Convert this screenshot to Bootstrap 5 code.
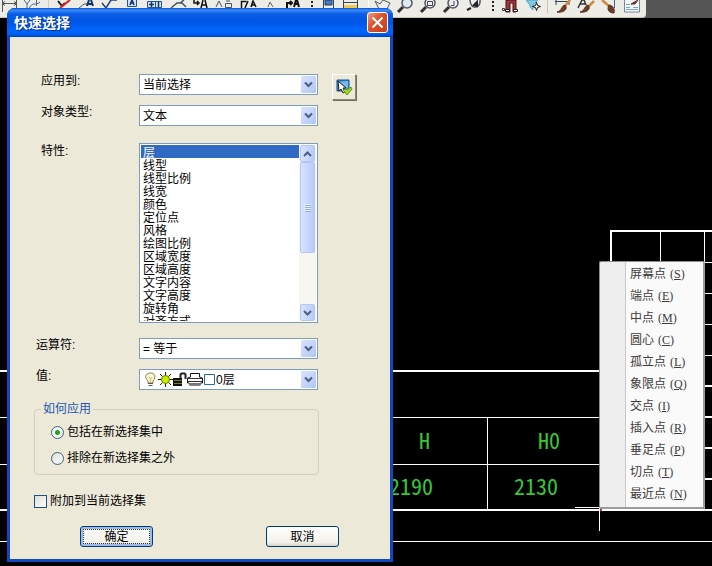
<!DOCTYPE html>
<html lang="zh-CN">
<head>
<meta charset="utf-8">
<meta name="viewport" content="width=device-width, initial-scale=1">
<title>快速选择</title>
<link href="https://cdn.jsdelivr.net/npm/bootstrap@5.3.0/dist/css/bootstrap.min.css" rel="stylesheet">
<style>
  body { background:#000; color:#000; font:12px/14px "Liberation Sans","Noto Sans CJK SC",sans-serif; }
  .cad-canvas { inset:0; }
  .cad-canvas text { fill:#35c835; font-family:"Noto Sans Mono CJK SC","Liberation Mono",monospace; font-size:22px; font-weight:300; }
  .cad-toolbar { background:#555; height:18px; }
  .cad-toolbar .strip { background:#eeece6; border-bottom:1px solid #c9c4b4; border-radius:0 0 4px 0; width:646px; }

  .qs-window { left:7px; top:8px; width:386px; background:#0a49d8; border:3px solid #1247c4; border-top:0; border-radius:8px 8px 0 0; box-shadow:inset 0 0 1px #001c90; }
  .qs-title { height:29px; margin:0 -3px; padding:0 5px 0 7px; border-radius:8px 8px 0 0; background:linear-gradient(#0a4fd0 0,#3c8cf8 2px,#0a5ce6 6px,#0055e4 14px,#0066fc 22px,#0060f4 26px,#0040c0 29px); }
  .qs-title h1 { font:700 14px/18px "Liberation Sans","Noto Sans CJK SC",sans-serif; color:#fff; text-shadow:1px 1px 1px #002a8c; }
  .qs-close { width:21px; height:21px; border:1px solid #fff; border-radius:3px; background:linear-gradient(135deg,#f0a08a,#dc5430 40%,#c63c14); }
  .qs-body { background:#ece9d8; padding:37px 30px 12px 24px; }
  .qs-grid { display:grid; grid-template-columns:105px 179px 24px; row-gap:10px; }
  .qs-grid label { padding-left:7px; }
  .qs-grid label.near { padding-left:2px; }
  .xp-select { appearance:none; width:100%; height:21px; padding:0 20px 0 3px; border:1px solid #7f9db9; border-radius:0; color:#000; font:inherit;
    background:#fff url("data:image/svg+xml,%3Csvg xmlns='http://www.w3.org/2000/svg' width='15' height='17'%3E%3Cdefs%3E%3ClinearGradient id='g' x2='1' y2='1'%3E%3Cstop stop-color='%23dbe5fe'/%3E%3Cstop offset='1' stop-color='%23afc5f6'/%3E%3C/linearGradient%3E%3C/defs%3E%3Crect width='15' height='17' rx='1' fill='url(%23g)'/%3E%3Cpath d='M4 6.500l3.500 3.500 3.500-3.500' fill='none' stroke='%234d6185' stroke-width='2.200'/%3E%3C/svg%3E") no-repeat right 1px center; }
  .with-icons { padding-left:76px; }
  .value-icons { left:5px; top:3px; pointer-events:none; }
  .qs-pick { grid-row:span 2; width:24px; height:26px; margin-left:14px; border:1px solid; border-color:#fff #8a8778 #8a8778 #fff; box-shadow:1px 1px 0 #716f64; background:#ece9d8; }
  .qs-list { margin-top:7px; height:180px; border:1px solid #7f9db9; background:#fff; padding:1px; }
  .qs-list select { appearance:none; border:0; border-radius:0; outline:0; padding:0; height:176px; font:inherit; overflow:hidden; background:#fff; color:#000; }
  .qs-list select::-webkit-scrollbar { display:none; }
  .qs-list option { display:flex; align-items:center; padding:0 2px; min-height:13px; height:13px; line-height:13px; }
  .qs-list option:checked { background:#316ac5 linear-gradient(#316ac5,#316ac5); color:#fff; -webkit-text-fill-color:#fff; }
  .qs-scroll { width:17px; background:#f7f6f0; }
  .qs-scroll button { width:15px; height:17px; margin:0 1px; border:1px solid #b5c7ee; border-radius:2px; background:linear-gradient(90deg,#d7e2fe,#b8ccfa); }
  .qs-scroll .thumb { height:91px; }
  .gap-above { margin-top:5px; }
  .qs-group { width:285px; margin-top:12px; padding:9px 16px; border:1px solid #d0d0bf; border-radius:4px; }
  .qs-group legend { float:none; width:auto; margin:0 0 0 -10px; padding:0 2px; font:inherit; color:#2456b4; }
  .qs-group .choice + .choice { margin-top:12px; }
  .choice { display:flex; align-items:center; gap:3px; height:14px; }
  .choice input { appearance:none; width:13px; height:13px; margin:0; border:1px solid #1c5180; background:linear-gradient(135deg,#dcdcd7,#fff); }
  .choice input[type=radio] { border-radius:50%; border-color:#3f6480; }
  .choice input[type=radio]:checked { background:radial-gradient(circle,#21a121 0 2px,#f4f8f2 3px); }
  .qs-attach { margin-top:19px; }
  .qs-actions { margin-top:18px; padding-left:46px; gap:113px; }
  .xp-btn { width:73px; height:21px; padding:0; border:1px solid #003c74; border-radius:3px; font:inherit; color:#000; background:linear-gradient(#fff,#f2f1ea 80%,#d8d2c4); }
  .xp-btn.default { box-shadow:inset 0 0 0 2px #9db9ee; outline:1px dotted #333; outline-offset:-4px; }

  .snap-menu { left:599px; top:261px; width:106px; padding:1px 0 2px; border:1px solid #8c8c8c; border-right:2px solid #9c9c9c; border-bottom:2px solid #9c9c9c; border-radius:2px; background:linear-gradient(90deg,#eee 25px,#c8c8c8 25px 26px,#fafafa 26px); }
  .snap-menu button { display:block; width:100%; height:22px; padding:0 0 0 30px; border:0; background:none; text-align:left; color:#3c3c3c; font:12px/22px "Liberation Serif","Noto Sans CJK SC",serif; white-space:nowrap; }
  .snap-menu span { margin-left:4px; }
</style>
<script src="https://cdn.jsdelivr.net/npm/bootstrap@5.3.0/dist/js/bootstrap.bundle.min.js"></script>
</head>
<body class="position-relative min-vh-100 overflow-hidden">

<svg class="cad-canvas position-absolute w-100 h-100" aria-label="图纸">
  <g fill="#fff">
    <path d="M0 370h600v2H0zM0 417h600v1H0zM0 464h600v1H0zM0 509h3000v2H0zM0 541h3000v1H0zM487 417h1v93h-1z"/>
    <path d="M610 230h2400v2H610zM610 230h2v40h-2zM660 231h1v40h-1zM704 231h1v279h-1z"/>
    <path d="M704 262h2000v1H704zM704 293h2000v1H704zM704 324h2000v1H704zM704 355h2000v1H704zM704 385h2000v2H704zM704 416h2000v2H704zM704 447h2000v2H704zM704 478h2000v2H704z"/>
    <path d="M575 507h25v1h-25zM599 507h1v24h-1z"/>
  </g>
  <path d="M600 508h2v3h-2z" fill="#c03030"/>
  <text x="419" y="449">H</text>
  <text x="538" y="449">H0</text>
  <text x="389" y="495">2190</text>
  <text x="514" y="495">2130</text>
</svg>

<header class="cad-toolbar position-relative" role="toolbar" aria-label="工具栏">
  <div class="strip">
    <svg class="d-block" width="646" height="17" fill="none" stroke="#334" stroke-width="1">
      <path d="M2.500 0v12M16.500 0v12M2 3.500h15M5 1.500l-3 2 3 2M14 1.500l3 2-3 2" stroke="#555"/>
      <path d="M24 0l3 4 3-4M27 4v4M36.500 0v6M29 9c3-8 7-3 11-7" stroke="#468"/>
      <path d="M48.500 0v9" stroke="#ccc"/>
      <path d="M58 1l4 5 3-3" stroke="#222" stroke-width="2"/><path d="M60 8L70 0" stroke="#d22" stroke-width="2"/>
      <path d="M79 8l5-4h4" stroke="#456"/><path d="M87 6l2-6M93 6l-2-6M88 4h4" stroke="#136" stroke-width="2"/>
      <path d="M102 3l4 5 5-8h6" stroke="#247" stroke-width="1.500"/>
      <path d="M127.500 0v6.500h9V0" stroke="#258" fill="#cfe2f2"/><path d="M130 5l2-5 2 5M131 3h2" stroke="#136" stroke-width="1.500"/>
      <path d="M147.500 1.500h14v6h-14zM155.500 1v6" stroke="#258" fill="#d8e6f0"/><path d="M149 4.500h5M151.500 2v5M158.500 2v5" stroke="#136" stroke-width="1.500"/>
      <path d="M171 8l6-5h5l4 4M180 3l4-3" stroke="#456" stroke-width="1.500"/>
      <path d="M194 0v3h5M197 1l2 2-2 2M201 8l2-8M207 8l-2-8M202 5h4" stroke="#111" stroke-width="1.500"/>
      <path d="M216 7l3-6 3 6M225.500 3.500h6v4h-6zM226 1h4" stroke="#456"/>
      <path d="M241.500 8V1.500h5M245 8l3-7M251 7l2-6 3 6M252 5h3" stroke="#111" stroke-width="1.500"/>
      <path d="M268 7l2-5 3 5" stroke="#666"/>
      <path d="M287 8V3h5M290 1l2 2-2 2M294 7l2-7h1l2 7M295 4h4" stroke="#111" stroke-width="2"/>
      <path d="M312 1v2M312 5v2" stroke="#222" stroke-width="2"/>
      <path d="M323.500 0v8M333.500 0v8" stroke="#345"/><path d="M325 0h7v5h-7z" fill="#447dbb" stroke="#236"/>
      <path d="M343.500 0v8M357.500 0v8M343 2.500h14" stroke="#345"/><path d="M344 5h13v3h-13z" fill="#f0ca48" stroke="none"/>
      <path d="M368.500 0v14" stroke="#fff"/>
      <path d="M375 1l5 3 3-4 7 3-3 6h-8z" fill="#eee" stroke="#555"/>
      <g stroke="#556" stroke-width="1.500"><circle cx="407" cy="3" r="5" fill="#dcebf0"/><circle cx="430" cy="3" r="5" fill="#eee"/><circle cx="453" cy="3" r="5" fill="#eee"/><path d="M470 0c0 10 11 9 10 0" fill="#eee"/></g>
      <path d="M403 7l-5 5M426 7l-5 5M449 7l-5 5" stroke="#333" stroke-width="3"/>
      <path d="M427.500 1.500h5v4h-5zM451 5.500h3V1" stroke="#445"/><path d="M471 8l-4 2M474 5l3-3v4z" stroke="#222" stroke-width="2"/>
      <path d="M493 1v2M493 5v2M493 9v2" stroke="#222" stroke-width="2"/>
      <path d="M506 0h10v12h-3V3h-3v9h-4z" fill="#963a40" stroke="#511"/><path d="M505.500 9.500h4v2h-4zM513.500 9.500h4v2h-4z" fill="#eee" stroke="#222"/><path d="M502.500 8.500h2v2h-2z"/>
      <path d="M526 0h12l-5 5v5l-3-3V5z" fill="#82cbe2" stroke="#4aa6c6"/><path d="M536.500 2.500l1 3 3 1-3 1-1 3-1-3-3-1 3-1z" fill="#fff" stroke="#111"/>
      <path d="M547.500 0v13" stroke="#c9c4b4"/>
      <path d="M555 1.500h15M556 0v5M569 0v5" stroke="#345"/>
      <path d="M578 8l4-8h2l2 5M580 4h5" stroke="#333" stroke-width="1.500"/>
      <g stroke="#ca8b42" stroke-width="2.500"><path d="M570 0l-5 6M594 1l-7 7M602 0l7 6"/></g>
      <path d="M565 5c4 5-3 8-8 7 5-1 4-6 8-7zM588 5c4 5-3 8-8 7 5-1 4-6 8-7zM609 5c5 1 6 5 5 8-6 0-7-4-5-8z" fill="#713c22" stroke="#532"/>
      <path d="M614.500 0v8" stroke="#369"/>
      <path d="M624.500-1h15v13h-15z" fill="#f5f8fb" stroke="#789"/><path d="M626 4.500h4M626 7.500h4M626 9.500h12M633 7.500h5" stroke="#79a5c5"/><path d="M631 4l7-4-3 4z" fill="#713c22" stroke="#532"/>
    </svg>
  </div>
</header>

<section class="qs-window position-absolute" role="dialog" aria-labelledby="qs-heading">
  <div class="qs-title d-flex align-items-center justify-content-between">
    <h1 class="m-0" id="qs-heading">快速选择</h1>
    <button type="button" class="qs-close d-flex align-items-center justify-content-center p-0" aria-label="关闭">
      <svg width="13" height="13" stroke="#fff" stroke-width="2"><path d="M1.500 1.500l10 10M11.500 1.500l-10 10"/></svg>
    </button>
  </div>
  <form class="qs-body">
    <div class="qs-grid">
      <label for="apply">应用到:</label>
      <select id="apply" class="xp-select"><option>当前选择</option></select>
      <button type="button" class="qs-pick p-0 d-flex align-items-center justify-content-center" aria-label="选择对象">
        <svg width="18" height="18"><path d="M2 2h12v11H2z" fill="#3d8fd0" stroke="#16509a"/><path d="M4 4l9-1v8z" fill="#78b9e8"/><path d="M3 3l1 10 2-2 2 4 2-1-2-4h3z" fill="#fff" stroke="#222"/><path d="M8 12l3-1 1 1 4-3 1 2-5 6z" fill="#a4d42a" stroke="#5e9a10"/></svg>
      </button>
      <label for="kind">对象类型:</label>
      <select id="kind" class="xp-select"><option>文本</option></select>

      <label for="prop" class="mt-2">特性:</label>
      <div class="qs-list d-flex">
        <select id="prop" size="13" class="flex-grow-1">
          <option selected>层</option><option>线型</option><option>线型比例</option><option>线宽</option><option>颜色</option><option>定位点</option><option>风格</option><option>绘图比例</option><option>区域宽度</option><option>区域高度</option><option>文字内容</option><option>文字高度</option><option>旋转角</option><option>对齐方式</option>
        </select>
        <div class="qs-scroll d-flex flex-column">
          <button type="button" class="p-0 d-flex align-items-center justify-content-center" aria-label="向上"><svg width="9" height="6" fill="none" stroke="#4d6185" stroke-width="2"><path d="M1 5l3.500-3.500L8 5"/></svg></button>
          <button type="button" class="thumb p-0 d-flex align-items-center justify-content-center" aria-label="滚动条"><svg width="7" height="8" stroke="#eef4fe"><path d="M0 .5h7M0 2.500h7M0 4.500h7M0 6.500h7"/><path d="M1 1.500h6M1 3.500h6M1 5.500h6M1 7.500h6" stroke="#8caeea"/></svg></button>
          <button type="button" class="mt-auto p-0 d-flex align-items-center justify-content-center" aria-label="向下"><svg width="9" height="6" fill="none" stroke="#4d6185" stroke-width="2"><path d="M1 1l3.500 3.500L8 1"/></svg></button>
        </div>
      </div>
      <span></span>

      <label for="oper" class="near gap-above">运算符:</label>
      <select id="oper" class="xp-select gap-above"><option>= 等于</option></select>
      <span></span>

      <label for="val" class="near">值:</label>
      <div class="position-relative">
        <select id="val" class="xp-select with-icons d-block"><option>0层</option></select>
        <svg class="value-icons position-absolute" width="72" height="15">
          <path d="M4 9C-1 4 3 1 6.500 1S13 4 9 9v2H4z" fill="#fffde0" stroke="#8a7c3a"/><path d="M4 11.500h5M4.500 13.500h4" stroke="#555"/><path d="M5 5l1.500 2L8 5M6.500 7v3" fill="none" stroke="#cbb94a"/>
          <path d="M21.500 0v15M14 7.500h15M16 2l11 11M27 2L16 13" stroke="#222"/><circle cx="21.500" cy="7.500" r="4" fill="#c4f000" stroke="#6a7a00"/>
          <path d="M29 6h9v8h-9z" fill="#111"/><path d="M30 8.500h8M30 11.500h8" stroke="#7c7c20"/><path d="M36.500 6V2.500l1-1h3l1 1V7" fill="none" stroke="#222" stroke-width="2"/>
          <path d="M46.500 5V1.500h9V5l3 1v5h-2v2h-11v-2h-2V6z" fill="#fff" stroke="#111"/><path d="M43 6.500h16M44 9.500h14" stroke="#333"/><path d="M45 11h12v2H45z" fill="#777"/>
          <path d="M60.500 2.500h10v10h-10z" fill="#fff" stroke="#28708c"/>
        </svg>
      </div>
    </div>

    <fieldset class="qs-group">
      <legend>如何应用</legend>
      <div class="choice"><input type="radio" name="how" id="incl" checked><label for="incl">包括在新选择集中</label></div>
      <div class="choice"><input type="radio" name="how" id="excl"><label for="excl">排除在新选择集之外</label></div>
    </fieldset>

    <div class="choice qs-attach"><input type="checkbox" id="attach"><label for="attach">附加到当前选择集</label></div>

    <div class="qs-actions d-flex">
      <button type="button" class="xp-btn default flex-shrink-0">确定</button>
      <button type="button" class="xp-btn flex-shrink-0">取消</button>
    </div>
  </form>
</section>

<ul class="snap-menu position-absolute list-unstyled m-0" aria-label="对象捕捉">
  <li><button type="button">屏幕点<span>(<u>S</u>)</span></button></li>
  <li><button type="button">端点<span>(<u>E</u>)</span></button></li>
  <li><button type="button">中点<span>(<u>M</u>)</span></button></li>
  <li><button type="button">圆心<span>(<u>C</u>)</span></button></li>
  <li><button type="button">孤立点<span>(<u>L</u>)</span></button></li>
  <li><button type="button">象限点<span>(<u>Q</u>)</span></button></li>
  <li><button type="button">交点<span>(<u>I</u>)</span></button></li>
  <li><button type="button">插入点<span>(<u>R</u>)</span></button></li>
  <li><button type="button">垂足点<span>(<u>P</u>)</span></button></li>
  <li><button type="button">切点<span>(<u>T</u>)</span></button></li>
  <li><button type="button">最近点<span>(<u>N</u>)</span></button></li>
</ul>
</body>
</html>
